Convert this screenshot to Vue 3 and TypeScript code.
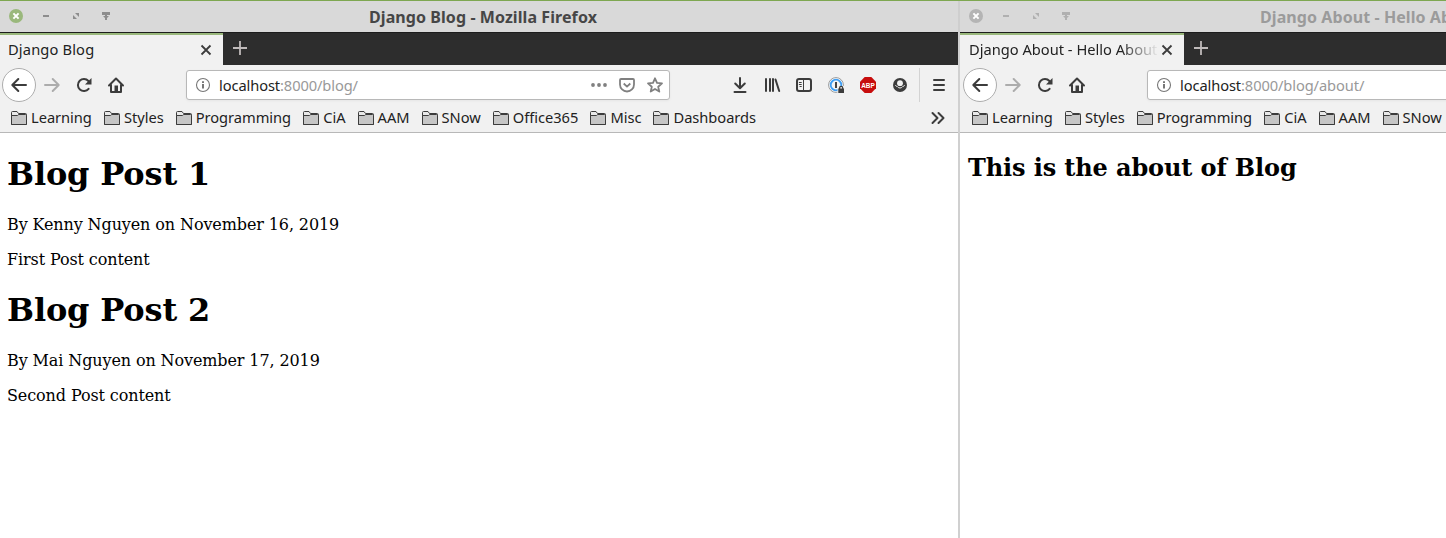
<script setup lang="ts">
interface BrowserWindow {
  id: string
  active: boolean
  title: string
  tab: string
  path: string
}

const windows: BrowserWindow[] = [
  { id: 'blog', active: true, title: 'Django Blog - Mozilla Firefox', tab: 'Django Blog', path: ':8000/blog/' },
  { id: 'about', active: false, title: 'Django About - Hello About - Mozilla Firefox', tab: 'Django About - Hello About', path: ':8000/blog/about/' },
]

const bookmarks: string[] = ['Learning', 'Styles', 'Programming', 'CiA', 'AAM', 'SNow', 'Office365', 'Misc', 'Dashboards']

const posts = [
  { title: 'Blog Post 1', byline: 'By Kenny Nguyen on November 16, 2019', content: 'First Post content' },
  { title: 'Blog Post 2', byline: 'By Mai Nguyen on November 17, 2019', content: 'Second Post content' },
]
</script>

<template>
  <div class="desktop">
    <section v-for="w in windows" :key="w.id" class="window" :class="[w.id, { inactive: !w.active }]">
      <header class="titlebar">
        <div class="controls">
          <svg class="close" viewBox="0 0 16 16"><circle cx="8" cy="8" r="7" /><path d="M5.4 5.4l5.2 5.2M10.6 5.4l-5.2 5.2" /></svg>
          <svg viewBox="0 0 16 16"><path d="M5 7h6v2H5z" /></svg>
          <svg viewBox="0 0 16 16"><path d="M7 5h4v4zM5 7v4h4z" /></svg>
          <svg viewBox="0 0 16 16"><path d="M4 4h8v3H9v1h2l-3 3-3-3h2V7H4zM7 10h2v2H7z" /></svg>
        </div>
        <span class="title">{{ w.title }}</span>
      </header>

      <div class="tabs">
        <div class="tab">
          <span class="tab-label" :class="{ fade: !w.active }">{{ w.tab }}</span>
          <svg class="tab-close" viewBox="0 0 16 16"><path d="M3.5 3.5l9 9M12.5 3.5l-9 9" /></svg>
        </div>
        <svg class="new-tab" viewBox="0 0 16 16"><path d="M8 1v14M1 8h14" /></svg>
      </div>

      <nav class="toolbar">
        <span class="back"><svg class="line" viewBox="0 0 16 16"><path d="M15 8H1.5M7.3 2L1.3 8l6 6" /></svg></span>
        <svg class="line forward" viewBox="0 0 16 16"><path d="M1 8h13.5M8.7 2l6 6-6 6" /></svg>
        <svg class="line reload" viewBox="0 0 16 16"><path d="M12.6 11.8A6 6 0 1 1 12.4 4" /><path class="solid" d="M15.5 1v6.500H9z" /></svg>
        <svg class="line home" viewBox="0 0 16 16"><path d="M1 8.5L8 1.500l7 7M3 8v7h10V8" /><path class="solid" d="M6.500 8.500h3.500v6.500H6.500z" /></svg>
        <div class="urlbar">
          <svg class="info" viewBox="0 0 16 16"><circle cx="8" cy="8" r="6.5" /><path d="M8 7v4.5M8 4.2v1.9" /></svg>
          <span class="url">localhost<i>{{ w.path }}</i></span>
          <svg class="page-action" viewBox="0 0 16 16"><g class="fill"><circle cx="2" cy="8" r="1.9" /><circle cx="8" cy="8" r="1.9" /><circle cx="14" cy="8" r="1.9" /></g></svg>
          <svg class="page-action" viewBox="0 0 16 16"><path d="M2 2h12q1 0 1 1v4.500a7 7 0 0 1-14 0V3q0-1 1-1zM4.700 6.500L8 9.600l3.300-3.100" /></svg>
          <svg class="page-action" viewBox="0 0 16 16"><path d="M8 1.300l2 4.600 5 .5-3.800 3.300 1.100 4.900L8 12l-4.300 2.600 1.100-4.900L1 6.400l5-.5z" /></svg>
        </div>
        <div class="tools">
          <svg class="line" viewBox="0 0 16 16"><path d="M8 1v10M3.200 6.500L8 11.300l4.800-4.800M2.500 15h11" /></svg>
          <svg class="line" viewBox="0 0 16 16"><path d="M2 2v12M6 2v12M9 2v12M11.500 2.500l3.700 11.500" /></svg>
          <svg class="line" viewBox="0 0 16 16"><rect x="1" y="2" width="14" height="12" rx="2" /><path class="thin" d="M7.500 2v12" /><path class="thin" d="M3.300 5.500h2M3.300 7.500h2M4 9.500h1.300" /></svg>
          <svg viewBox="0 0 16 16">
            <circle cx="8" cy="8" r="7.400" fill="#fff" stroke="#999" stroke-width="1" />
            <circle cx="8" cy="8" r="5.300" fill="#f5f5f5" stroke="#3f9ff5" stroke-width="1.800" />
            <path d="M8 5v6" stroke="#444" stroke-width="2" />
            <path d="M9.500 9h7v7h-7z" fill="#f1f1f1" />
            <path d="M10.300 11.500h5.700v4.500h-5.700z" fill="#3c3c3c" />
            <path d="M11.600 12v-1a1.500 1.500 0 0 1 3.100 0v1" fill="none" stroke="#3c3c3c" stroke-width="1.300" />
          </svg>
          <svg viewBox="0 0 16 16">
            <path d="M4.700 0h6.600L16 4.700v6.600L11.300 16H4.700L0 11.300V4.700z" fill="#c70d0d" />
            <text class="abp" x="8" y="11" text-anchor="middle" textLength="13.5" lengthAdjust="spacingAndGlyphs">ABP</text>
          </svg>
          <svg viewBox="0 0 16 16"><circle cx="8" cy="8" r="7" fill="#3c3c3c" /><path d="M3.300 8.300q.8 1.100 1.900 1.100 1 1.600 2.800 1.600t2.800-1.600q1.100 0 1.900-1.100" fill="none" stroke="#f1f1f1" stroke-width="1" /><circle cx="8" cy="6.200" r="2.900" fill="#f1f1f1" /></svg>
        </div>
        <span class="divider"></span>
        <svg class="line menu" viewBox="0 0 16 16"><path d="M3 3h10M3 8h10M3 13h10" /></svg>
      </nav>

      <div class="bookmarks">
        <span v-for="b in bookmarks" :key="b" class="bookmark">
          <svg viewBox="0 0 16 16"><path d="M.5 14.500V2.500q0-1 1-1h4.500l1.500 2h7q1 0 1 1v10z" fill="#e9e9e9" /><path d="M.5 14.500v-9h6l1.200-1h6.800q1 0 1 1v9z" fill="#c6c6c6" /></svg>
          {{ b }}
        </span>
        <svg class="line overflow" viewBox="0 0 16 16"><path d="M2.500 3L7.500 8l-5 5M8.500 3l5 5-5 5" /></svg>
      </div>

      <main class="page">
        <template v-if="w.id === 'blog'">
          <article v-for="p in posts" :key="p.title">
            <h1>{{ p.title }}</h1>
            <p>{{ p.byline }}</p>
            <p>{{ p.content }}</p>
          </article>
        </template>
        <h2 v-else>This is the about of Blog</h2>
      </main>
    </section>
  </div>
</template>

<style scoped>
.desktop {
  display: flex;
  width: 1446px;
  height: 538px;
  overflow: hidden;
  background: #fff;
  font-family: "Noto Sans", sans-serif;
  font-size: 14.67px;
  color: #222;
}
svg { display: block; flex: none; width: 16px; height: 16px; overflow: visible; }
.window { flex: none; width: 959px; height: 538px; box-sizing: content-box; }
.blog { margin-left: -1px; border-right: 2px solid #d0d0d0; }
.titlebar {
  display: flex;
  align-items: center;
  position: relative;
  height: 32px;
  box-sizing: border-box;
  border-top: 1px solid #7ea751;
  background: #d9d9d9;
}
.blog .titlebar { margin-right: -2px; padding-right: 2px; }
.blog .titlebar::after {
  content: "";
  position: absolute;
  right: 0;
  top: 0;
  width: 2px;
  height: 31px;
  background: #cecece;
}
.controls { display: flex; gap: 14px; padding-left: 9px; fill: #8d8d8d; margin-top: -1px; }
.inactive .controls { padding-left: 8px; fill: #b0b0b0; }
.close circle { fill: #9ab87c; }
.inactive .close circle { fill: #b4b4b4; }
.close path { stroke: #fff; stroke-width: 2; }
.title { flex: 1; padding-left: 186px; font-size: 16px; font-weight: bold; letter-spacing: 0.08px; color: #464646; line-height: 30px; white-space: nowrap; }
.blog .title { padding-left: 255px; }
.inactive .title { color: #9b9b9b; }
.tabs { display: flex; align-items: center; height: 33px; background: #2d2d2d; border-top: 1px solid #1c1c1c; box-sizing: border-box; }
.tab {
  display: flex;
  align-items: center;
  justify-content: space-between;
  box-sizing: border-box;
  width: 224px;
  height: 32px;
  padding: 0 9px;
  background: #f1f1f1;
  border-top: 2px solid #9ab87c;
}
.tab-label { white-space: nowrap; line-height: 28px; padding-bottom: 2px; overflow: hidden; width: 188px; }
.blog .tab-label { letter-spacing: 0.15px; }
.fade { -webkit-mask-image: linear-gradient(to right, #000 152px, transparent 190px); mask-image: linear-gradient(to right, #000 152px, transparent 190px); }
.tab-close { stroke: #3c3c3c; stroke-width: 1.8; }
.new-tab { margin: -2px 0 0 9px; stroke: #bfbaba; stroke-width: 1.8; }
.toolbar { display: flex; align-items: center; height: 40px; padding-left: 3px; background: #f1f1f1; }
.line { fill: none; stroke: #3c3c3c; stroke-width: 2; stroke-linecap: round; stroke-linejoin: round; }
.solid { fill: #3c3c3c; stroke: none; }
.thin { stroke-width: 1; }
.back {
  display: grid;
  place-items: center;
  box-sizing: border-box;
  width: 34px;
  height: 34px;
  border: 1px solid #adadad;
  border-radius: 50%;
  background: #fff;
}
.forward { margin-left: 8px; stroke: #acacac; }
.reload, .home { margin-left: 16px; }
.urlbar {
  display: flex;
  align-items: center;
  flex: none;
  box-sizing: border-box;
  width: 484px;
  height: 30px;
  margin-left: 62px;
  padding: 0 6px 0 8px;
  border: 1px solid #b8b8b8;
  border-radius: 3px;
  background: #fff;
  box-shadow: 0 1px 3px #0000000d;
}
.info { fill: none; stroke: #777; stroke-width: 1.1; }
.info path { stroke-width: 2; }
.url { flex: 1; margin-left: 8px; color: #222; letter-spacing: -0.1px; }
.url i { font-style: normal; color: #999; }
.page-action { margin-left: 12px; fill: none; stroke: #808080; stroke-width: 1.8; stroke-linejoin: round; }
.fill { fill: #808080; stroke: none; }
.tools { display: flex; gap: 16px; margin-left: 62px; }
.abp { font: bold 8px "Liberation Sans", sans-serif; fill: #fff; }
.divider { width: 1px; height: 34px; margin: 0 11px; background: #d3d3d3; }
.bookmarks {
  display: flex;
  align-items: center;
  height: 28px;
  box-sizing: border-box;
  border-bottom: 1px solid #b8b8b8;
  padding: 0 12px 1px;
  background: #f1f1f1;
}
.bookmark { display: flex; align-items: center; gap: 4px; margin-right: 12.1px; white-space: nowrap; line-height: 20px; padding-bottom: 2px; letter-spacing: -0.035px; }
.bookmark svg { fill: none; stroke: #3c3c3c; stroke-width: 1; margin-top: 2px; }
.overflow { margin-left: auto; }
.page { padding: 0 8px; color: #000; font-family: "DejaVu Serif", serif; font-size: 16px; display: flow-root; }
h1 { margin: 22.4px 0 21.44px; font-size: 32px; line-height: 38px; letter-spacing: -0.15px; }
h2 { margin: 20.92px 0; font-size: 24px; line-height: 28px; letter-spacing: -0.12px; }
p { margin: 16px 0; line-height: 19px; letter-spacing: -0.11px; }
</style>
<style>
body { margin: 0; overflow: hidden; }
</style>
